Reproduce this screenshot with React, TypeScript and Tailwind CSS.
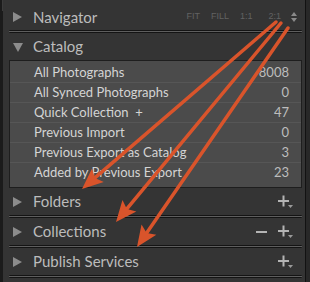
import React from 'react';

const font = { fontFamily: 'Lato, "Open Sans", sans-serif' };

const catalogRows = [
    { name: 'All Photographs', count: '8008' },
    { name: 'All Synced Photographs', count: '0' },
    { name: 'Quick Collection  +', count: '47' },
    { name: 'Previous Import', count: '0' },
    { name: 'Previous Export as Catalog', count: '3' },
    { name: 'Added by Previous Export', count: '23' },
];

function TriRight() {
    return (
        <svg width="10" height="10" viewBox="0 0 10 10" className="shrink-0">
            <polygon points="0,0 9,5 0,10" fill="#8c8c8c" />
        </svg>
    );
}

function TriDown() {
    return (
        <svg width="10" height="10" viewBox="0 0 10 10" className="shrink-0">
            <polygon points="0,1 10,1 5,10" fill="#8c8c8c" />
        </svg>
    );
}

function PlusIcon() {
    return (
        <svg width="16" height="14" viewBox="0 0 16 14">
            <rect x="0" y="5" width="11" height="2" fill="#b4b4b4" />
            <rect x="4.5" y="0.5" width="2" height="11" fill="#b4b4b4" />
            <polygon points="10,10 15,10 12.5,13" fill="#9a9a9a" />
        </svg>
    );
}

function MinusIcon() {
    return (
        <svg width="12" height="14" viewBox="0 0 12 14">
            <rect x="0" y="6" width="11" height="2" fill="#b4b4b4" />
        </svg>
    );
}

function Separator() {
    return <div className="ml-[6px] mr-[3px] h-[3px] rounded-[1px] border-y border-[#141414] bg-[#5e5e5e]" />;
}

function Header({ title, open, right }: { title: string; open?: boolean; right?: React.ReactNode }) {
    return (
        <div className="h-[27px] flex items-center pl-[10px] pr-[11px]">
            <div className="w-[20px]">{open ? <TriDown /> : <TriRight />}</div>
            <span className="text-[15px] text-[#bcbcbc]">{title}</span>
            <div className="ml-auto flex items-center gap-[10px]">{right}</div>
        </div>
    );
}

function Arrow({ x1, y1, x2, y2 }: { x1: number; y1: number; x2: number; y2: number }) {
    const dx = x2 - x1;
    const dy = y2 - y1;
    const len = Math.hypot(dx, dy);
    const ux = dx / len;
    const uy = dy / len;
    const L = 21;
    const W = 9;
    const bx = x2 - ux * L;
    const by = y2 - uy * L;
    const px = -uy;
    const py = ux;
    const nx = x2 - ux * (L - 4);
    const ny = y2 - uy * (L - 4);
    const pts = `${x2},${y2} ${bx + px * W},${by + py * W} ${nx},${ny} ${bx - px * W},${by - py * W}`;
    return (
        <g>
            <line x1={x1} y1={y1} x2={nx} y2={ny} stroke="#d9542b" strokeWidth="3.5" strokeLinecap="round" />
            <polygon points={pts} fill="#d9542b" />
        </g>
    );
}

export default function App() {
    return (
        <div className="relative w-[310px] h-[282px] overflow-hidden bg-[#1b1b1b] flex" style={font}>
            {/* left gutter */}
            <div className="w-[3px] flex">
                <div className="w-[2px]" />
                <div className="w-[1px] h-[11px] bg-[#3c3c3c]" />
            </div>

            {/* panel */}
            <div className="w-[302px] bg-[#343434] flex flex-col">
                <div className="h-[30px] flex items-center pl-[10px] pr-[8px] pt-[4px]">
                    <div className="w-[20px]"><TriRight /></div>
                    <span className="text-[15px] text-[#bcbcbc]">Navigator</span>
                    <div
                        className="ml-auto flex items-center text-[9px] text-[#626262]"
                        style={{ fontFamily: '"Liberation Sans", sans-serif' }}
                    >
                        <span className="mr-[11px]">FIT</span>
                        <span className="mr-[11px]">FILL</span>
                        <span className="mr-[16px]">1:1</span>
                        <span className="mr-[10px]">2:1</span>
                        <svg width="6" height="10" viewBox="0 0 6 10">
                            <polygon points="0,4 6,4 3,0" fill="#8a8a8a" />
                            <polygon points="0,6 6,6 3,10" fill="#8a8a8a" />
                        </svg>
                    </div>
                </div>
                <Separator />

                <Header title="Catalog" open />
                <div className="ml-[6px] mr-[3px] h-[128px] border border-[#1e1e1e] bg-[#4b4b4b] pt-[2px]">
                    {catalogRows.map((row, i) => (
                        <div
                            key={row.name}
                            className={`h-[20px] flex items-center pl-[24px] pr-[12px] ${i < catalogRows.length - 1 ? 'border-b border-[#565656]' : ''}`}
                        >
                            <span className="text-[13px] text-[#d4d4d4] whitespace-pre">{row.name}</span>
                            <span className="ml-auto text-[13px] text-[#bdbdbd]">{row.count}</span>
                        </div>
                    ))}
                </div>

                <Header title="Folders" right={<PlusIcon />} />
                <Separator />
                <Header title="Collections" right={<><MinusIcon /><PlusIcon /></>} />
                <Separator />
                <Header title="Publish Services" right={<PlusIcon />} />
                <Separator />
            </div>

            {/* right gutter */}
            <div className="w-[1px] bg-[#121212]" />
            <div className="flex-1 bg-[#282828]" />

            {/* annotation arrows */}
            <svg className="absolute inset-0 pointer-events-none" width="310" height="282" viewBox="0 0 310 282">
                <Arrow x1={276} y1={22} x2={82} y2={189} />
                <Arrow x1={281} y1={23} x2={116} y2={222} />
                <Arrow x1={288} y1={28} x2={137} y2={247} />
            </svg>
        </div>
    );
}
